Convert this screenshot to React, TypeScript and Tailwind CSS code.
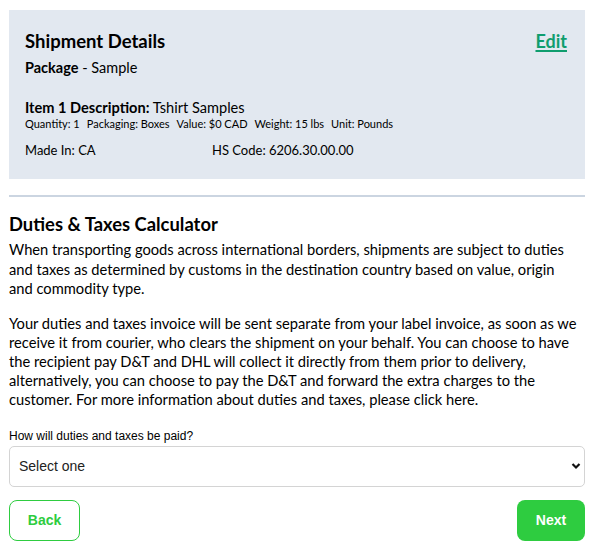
import { useState } from "react";

export default function App() {
  const [payer, setPayer] = useState("");

  return (
    <div className="bg-white px-[9px] pt-[10px] pb-4 text-black font-['Lato',sans-serif]">
      {/* shipment summary */}
      <div className="bg-[#e2e8f0] px-4 pt-[20px] pb-[21px]">
        <div className="flex items-start justify-between">
          <h2 className="text-[18.5px] font-bold leading-[22px]">Shipment Details</h2>
          <a href="#" className="mr-[2px] text-[18px] font-bold leading-[22px] text-[#0f9d6e] underline underline-offset-2 decoration-2">
            Edit
          </a>
        </div>
        <p className="mt-[7px] text-[14.5px] leading-[18px]">
          <span className="font-bold">Package</span> - Sample
        </p>
        <p className="mt-[22px] text-[14.6px] leading-[18px]">
          <span className="font-bold">Item 1 Description:</span> Tshirt Samples
        </p>
        <div className="flex gap-[7px] text-[11px] leading-[14px]">
          <span>Quantity: 1</span>
          <span>Packaging: Boxes</span>
          <span>Value: $0 CAD</span>
          <span>Weight: 15 lbs</span>
          <span>Unit: Pounds</span>
        </div>
        <div className="mt-[11px] flex text-[13px] leading-[16px]">
          <span className="w-[187px]">Made In: CA</span>
          <span>HS Code: 6206.30.00.00</span>
        </div>
      </div>

      <hr className="mt-[16px] border-t-2 border-[#cbd5e1]" />

      {/* duties & taxes */}
      <h2 className="mt-[16px] text-[18.4px] font-bold leading-[22px]">Duties &amp; Taxes Calculator</h2>
      <p className="mt-[5px] pr-[16px] text-[14.7px] leading-[19.5px]">
        When transporting goods across international borders, shipments are subject to duties and taxes as
        determined by customs in the destination country based on value, origin and commodity type.
      </p>
      <p className="mt-[15px] text-[14.7px] leading-[19px]">
        Your duties and taxes invoice will be sent separate from your label invoice, as soon as we receive it from
        courier, who clears the shipment on your behalf. You can choose to have the recipient pay D&amp;T and DHL
        will collect it directly from them prior to delivery, alternatively, you can choose to pay the D&amp;T and
        forward the extra charges to the customer. For more information about duties and taxes, please click here.
      </p>

      <label className="mt-[20px] block text-[12px] leading-[14px] font-['Liberation_Sans',Arial,sans-serif]">
        How will duties and taxes be paid?
      </label>
      <div className="relative mt-[3px]">
        <select
          value={payer}
          onChange={(e) => setPayer(e.target.value)}
          className="h-[41px] w-full appearance-none rounded-[5px] border border-[#d4d4d4] bg-white pl-[9px] text-[14px] text-[#222] font-['Liberation_Sans',Arial,sans-serif]"
        >
          <option value="">Select one</option>
          <option value="sender">Sender pays</option>
          <option value="recipient">Recipient pays</option>
        </select>
        <svg className="pointer-events-none absolute right-[4px] top-[16px]" width="10" height="8" viewBox="0 0 10 8">
          <path d="M1.5 2 L5 5.5 L8.5 2" fill="none" stroke="#111" strokeWidth="2.2" />
        </svg>
      </div>

      <div className="mt-[13px] flex justify-between font-['Liberation_Sans',Arial,sans-serif]">
        <button className="h-[41px] w-[71px] rounded-[8px] border border-[#2ecc40] bg-white text-[14px] font-bold text-[#2ecc40]">
          Back
        </button>
        <button className="h-[41px] w-[68px] rounded-[8px] bg-[#2ecc40] text-[14px] font-bold text-white">
          Next
        </button>
      </div>
    </div>
  );
}
